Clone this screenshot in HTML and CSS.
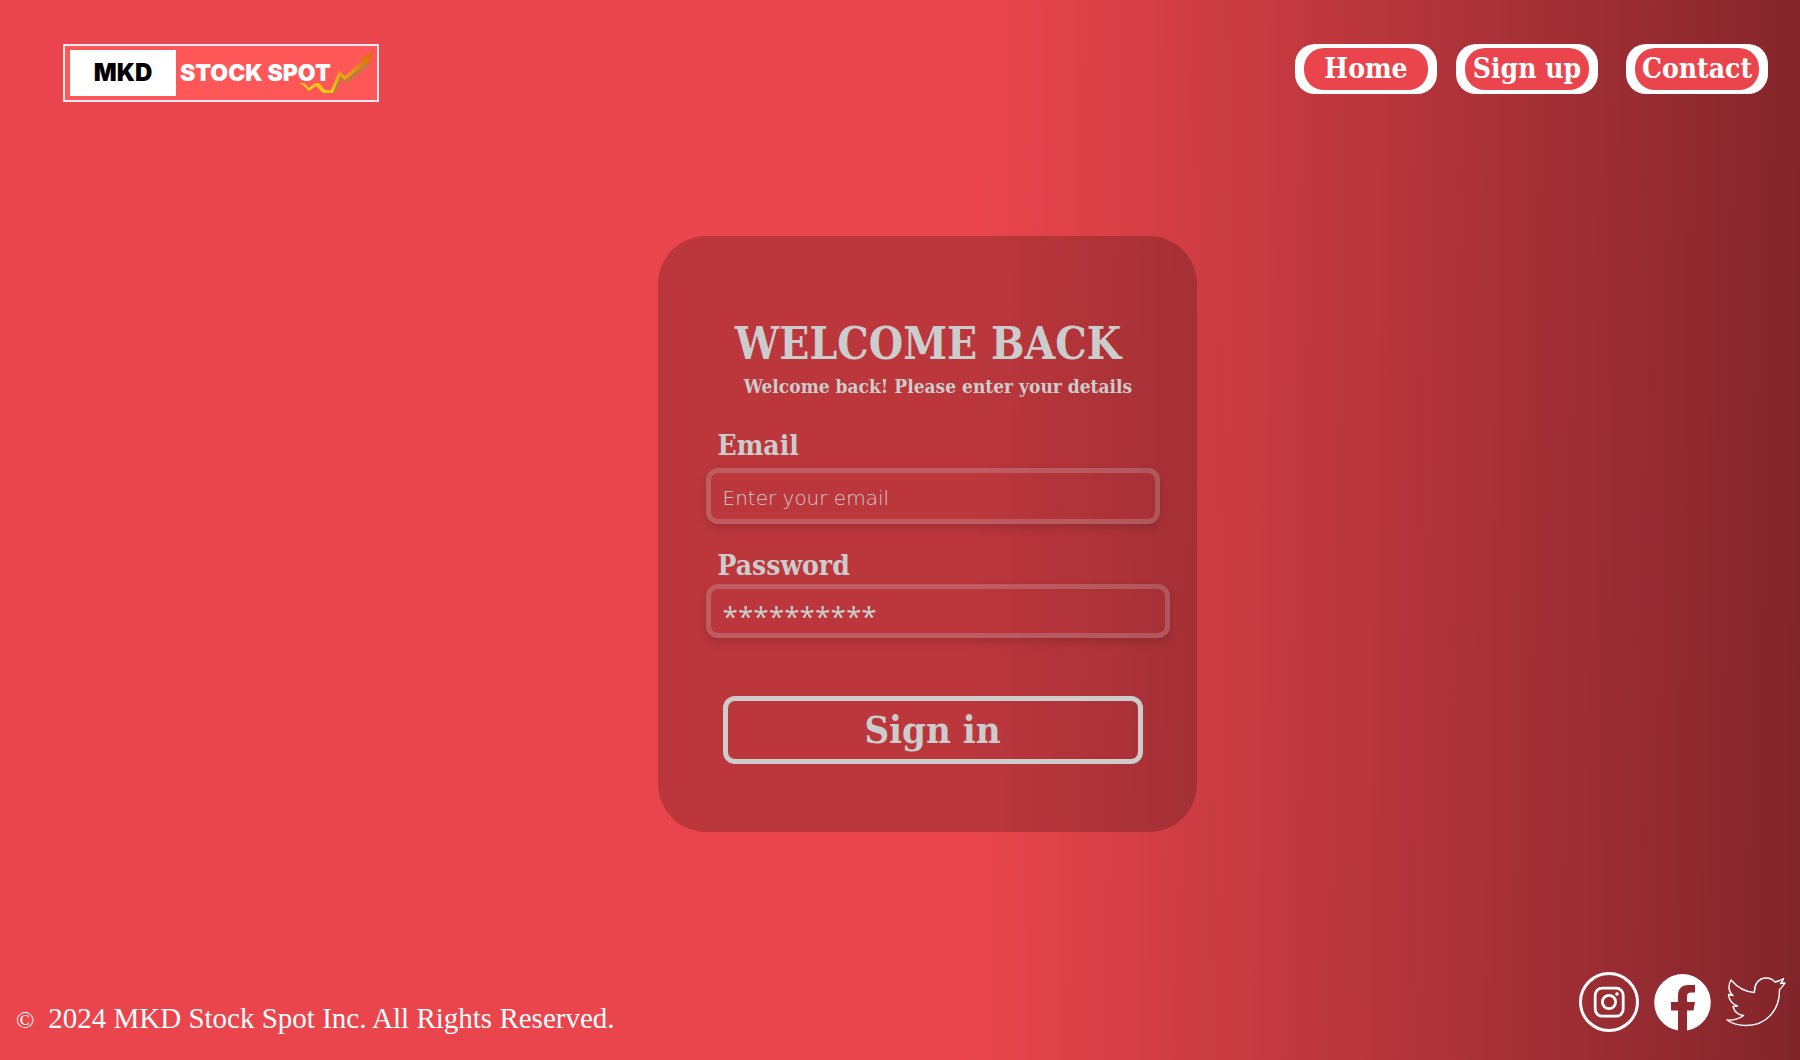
FILE: index.html
```html
<!DOCTYPE html>
<html lang="en">
<head>
<meta charset="utf-8">
<title>MKD Stock Spot</title>
<meta name="viewport" content="width=device-width, initial-scale=1">
<link rel="stylesheet" href="styles.css">
</head>
<body>
<header class="header">
  <a class="logo" href="#" aria-label="MKD Stock Spot">
    <span class="logo-mark">MKD</span>
    <span class="logo-name">STOCK SPOT</span>
    <svg class="logo-arrow" viewBox="0 0 76 44" aria-hidden="true">
      <defs>
        <linearGradient id="gold" x1="0" y1="1" x2="1" y2="0">
          <stop offset="0" stop-color="#ffdd17"/>
          <stop offset=".5" stop-color="#e6a817"/>
          <stop offset="1" stop-color="#d9660a"/>
        </linearGradient>
      </defs>
      <path fill="#b9803a" d="M35 41 43 21 48 28 69 10 72 12 49 31 44 27 37 41Z"/>
      <path fill="url(#gold)" d="M1 31 6 31 11 36 17 31 21 31 27 38 33 38 41 19 47 24 65 8 62 6 75 0 70 13 68 11 47 28 42 24 35 41 25 41 18 34 11 39 5 33Z"/>
    </svg>
  </a>
  <nav class="nav">
    <button class="nav-button" type="button"><span>Home</span></button>
    <button class="nav-button" type="button"><span>Sign up</span></button>
    <button class="nav-button nav-button-last" type="button"><span>Contact</span></button>
  </nav>
</header>

<main class="main">
  <form class="card">
    <h1 class="title">WELCOME BACK</h1>
    <p class="subtitle">Welcome back! Please enter your details</p>
    <label class="label label-email" for="email">Email</label>
    <input class="field field-email" id="email" type="email" placeholder="Enter your email">
    <label class="label" for="password">Password</label>
    <input class="field field-password" id="password" type="password" placeholder="**********">
    <button class="submit" type="submit">Sign in</button>
  </form>
</main>

<footer class="footer">
  <p class="copyright"><span class="copyright-sign">©</span>2024 MKD Stock Spot Inc. All Rights Reserved.</p>
  <div class="social">
    <a href="#" aria-label="Instagram">
      <svg width="60" height="60" viewBox="0 0 60 60" fill="none" stroke="#fff">
        <circle cx="30" cy="30" r="28.5" stroke-width="3"/>
        <rect x="16.2" y="16.2" width="28" height="28" rx="7" stroke-width="2.8"/>
        <circle cx="30" cy="30" r="6.6" stroke-width="2.8"/>
        <circle cx="38" cy="22" r="1.8" fill="#fff" stroke="none"/>
      </svg>
    </a>
    <a class="facebook" href="#" aria-label="Facebook">
      <svg width="57" height="57" viewBox="0 0 57 57">
        <path fill="#fff" d="M28.5 0A28.5 28.5 0 0 0 24 56.600V36.500H17V28H24V22C24 14.500 28 11 34 11H41V18.500H37C34 18.500 33 20 33 22.500V28H41L39.500 36.500H33V56.600A28.500 28.500 0 0 0 28.500 0Z"/>
      </svg>
    </a>
    <a href="#" aria-label="Twitter">
      <svg width="60" height="50" viewBox="0 0 60 50" fill="none" stroke="#fff" stroke-width="1.400" stroke-linejoin="round">
        <path d="M5 3C11 10 19 15 28.500 15.500C28 7 33 1 40 1C44 1 47 2.500 49 5C52 4.500 55 3 57.500 1.500C57 3.500 56 5 54.500 6.500L59 6C57.500 8.500 56 10.500 53.500 12.500C54 31 42 48.500 20 48.500C13 48.500 6 46.500 1 43C7 43.500 13 42 17.500 38.500C12 38 8.500 35 7 29.500L11.500 29C6 27 3 22.500 2.500 17.500L7 18.500C2 14.500 2 8 5 3Z"/>
      </svg>
    </a>
  </div>
</footer>
</body>
</html>
```
FILE: styles.css
```css
* {
  box-sizing: border-box;
}

body {
  display: flex;
  flex-direction: column;
  min-height: 100vh;
  margin: 0;
  color: #fff;
  font-family: "DejaVu Serif Condensed", "DejaVu Serif", serif;
  background: linear-gradient(91deg, #ea454c 54%, #81252a 100%);
}

.header {
  display: flex;
  justify-content: space-between;
  align-items: flex-start;
  padding: 44px 32px 0 63px;
}

.logo {
  position: relative;
  display: flex;
  align-items: center;
  width: 316px;
  height: 58px;
  padding: 0 5px;
  border: 2px solid #ffe9f0;
  background: #ff5757;
  color: #fff;
  font: 900 23px/46px Inter, sans-serif;
  text-decoration: none;
}

.logo-mark {
  width: 106px;
  margin-right: 4px;
  background: #fff;
  color: #000;
  font-size: 24px;
  text-align: center;
}

.logo-name {
  white-space: nowrap;
}

.logo-arrow {
  position: absolute;
  right: 3px;
  bottom: 4px;
  width: 76px;
  height: 44px;
}

.nav {
  display: flex;
  gap: 19px;
}

.nav-button {
  width: 142px;
  height: 50px;
  padding: 4px 9px;
  border: 0;
  border-radius: 20px;
  background: #fff;
  color: #fff;
  font: bold 28px/42px "DejaVu Serif Condensed", "DejaVu Serif", serif;
}

.nav-button span {
  display: flex;
  justify-content: center;
  border-radius: 20px;
  background: #ea454c;
  white-space: nowrap;
}

.nav-button-last {
  margin-left: 9px;
}

.main {
  display: flex;
  flex: 1;
  justify-content: center;
  align-items: flex-start;
  padding: 134px 0 48px 54px;
}

.card {
  display: flex;
  flex-direction: column;
  width: 539px;
  padding: 80px 26px 68px 48px;
  border-radius: 48px;
  background: rgba(0, 0, 0, 0.2);
  color: #ccc;
}

.title {
  margin: 0;
  padding-right: 20px;
  font-size: 44px;
  line-height: 56px;
  text-align: center;
  white-space: nowrap;
}

.subtitle {
  margin: 0 0 28px;
  font-size: 19px;
  font-weight: bold;
  line-height: 28px;
  text-align: center;
  white-space: nowrap;
}

.label {
  padding-left: 12px;
  font-size: 28px;
  font-weight: bold;
  line-height: 36px;
}

.label-email {
  margin-bottom: 4px;
}

.field {
  height: 56px;
  padding: 4px 12px 0;
  border: 5px solid rgba(204, 204, 204, 0.25);
  border-radius: 12px;
  background: transparent;
  background-clip: padding-box;
  box-shadow: 0 4px 8px rgba(0, 0, 0, 0.15);
  color: #ccc;
  font: 200 20px "DejaVu Sans Light", "DejaVu Sans", sans-serif;
}

.field::placeholder {
  color: #ccc;
  opacity: 1;
}

.field-email {
  width: 454px;
  margin-bottom: 24px;
}

.field-password {
  width: 464px;
  height: 54px;
  margin-bottom: 58px;
  padding: 10px 12px 0;
  font: 28px "Open Sans", sans-serif;
}

.submit {
  width: 420px;
  height: 68px;
  margin-left: 17px;
  border: 5px solid #ccc;
  border-radius: 12px;
  background: none;
  color: #ccc;
  font: bold 38px/48px "DejaVu Serif Condensed", "DejaVu Serif", serif;
}

.footer {
  display: flex;
  justify-content: space-between;
  align-items: flex-end;
  padding: 0 14px 28px 16px;
}

.copyright {
  margin: 0;
  font: 29px/24px "Liberation Serif", serif;
}

.copyright-sign {
  margin-right: 14px;
  font-size: 24px;
}

.social {
  display: flex;
  align-items: center;
  gap: 15px;
}

.social svg {
  display: block;
}
```
